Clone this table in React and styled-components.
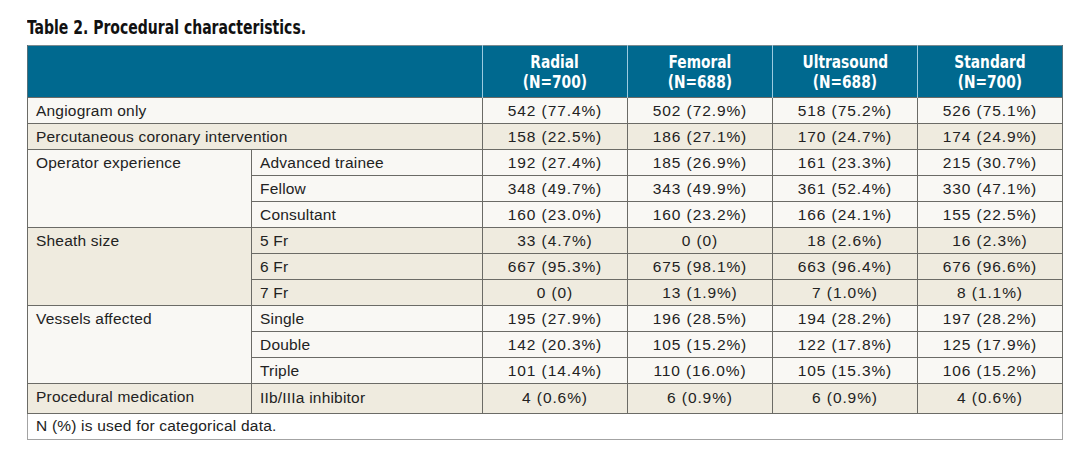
import React from "react";
import styled, { createGlobalStyle } from "styled-components";

const Global = createGlobalStyle`
  html, body { margin: 0; padding: 0; background: #ffffff; }
  body { font-family: "Liberation Sans", Arial, sans-serif; color: #222; }
`;

const Page = styled.div`
  width: 1086px;
  height: 462px;
  padding: 0 0 0 27px;
  box-sizing: border-box;
  overflow: hidden;
`;

const Title = styled.h1`
  margin: 0;
  padding-top: 16px;
  height: 45px;
  box-sizing: border-box;
  font-family: "DejaVu Sans Condensed", "DejaVu Sans", sans-serif;
  font-stretch: condensed;
  font-weight: 700;
  font-size: 19px;
  line-height: 22px;
  color: #111;
  white-space: nowrap;
`;

const Squeeze = styled.span`
  display: inline-block;
  transform: scaleX(${(p) => p.$x});
  transform-origin: ${(p) => (p.$left ? "left center" : "center center")};
`;

const Table = styled.table`
  border-collapse: collapse;
  table-layout: fixed;
  width: 1035px;
  font-size: 15.5px;
  color: #222;
`;

const HeadRow = styled.tr`
  background: #00698f;
  height: 52px;
  border-top: 1px solid #7a8a90;
`;

const HeadCell = styled.th`
  padding: 0;
  font-family: "DejaVu Sans Condensed", "DejaVu Sans", sans-serif;
  font-stretch: condensed;
  font-weight: 700;
  font-size: 18px;
  line-height: 20px;
  color: #ffffff;
  text-align: center;
  vertical-align: middle;
  white-space: nowrap;
  border-left: 1px solid #9ccbe0;
  &:first-child { border-left: 1px solid #55707a; }
  &:last-child { border-right: 1px solid #55707a; }
`;

const Row = styled.tr`
  height: 26px;
`;

const Cell = styled.td`
  padding: 0 8px;
  height: 24.8px;
  line-height: 18px;
  vertical-align: ${(p) => (p.$top ? "top" : "middle")};
  padding-top: ${(p) => (p.$top ? "4px" : "0")};
  background: ${(p) => (p.$shade ? "#efebdf" : "#f9f8f4")};
  border: 1px solid #6b6b66;
  text-align: ${(p) => (p.$num ? "center" : "left")};
  letter-spacing: ${(p) => (p.$num ? "0.9px" : "0.2px")};
  white-space: nowrap;
  overflow: hidden;
`;

const FootCell = styled.td`
  padding: 0 8px;
  height: 24.8px;
  background: #ffffff;
  border: 1px solid #a3a3a3;
  border-top: 1px solid #6b6b66;
  text-align: left;
  letter-spacing: 0.2px;
`;

const groups = [
  { label: "Angiogram only", rows: [[null, "542 (77.4%)", "502 (72.9%)", "518 (75.2%)", "526 (75.1%)"]], shade: false },
  { label: "Percutaneous coronary intervention", rows: [[null, "158 (22.5%)", "186 (27.1%)", "170 (24.7%)", "174 (24.9%)"]], shade: true },
  {
    label: "Operator experience",
    shade: false,
    rows: [
      ["Advanced trainee", "192 (27.4%)", "185 (26.9%)", "161 (23.3%)", "215 (30.7%)"],
      ["Fellow", "348 (49.7%)", "343 (49.9%)", "361 (52.4%)", "330 (47.1%)"],
      ["Consultant", "160 (23.0%)", "160 (23.2%)", "166 (24.1%)", "155 (22.5%)"],
    ],
  },
  {
    label: "Sheath size",
    shade: true,
    rows: [
      ["5 Fr", "33 (4.7%)", "0 (0)", "18 (2.6%)", "16 (2.3%)"],
      ["6 Fr", "667 (95.3%)", "675 (98.1%)", "663 (96.4%)", "676 (96.6%)"],
      ["7 Fr", "0 (0)", "13 (1.9%)", "7 (1.0%)", "8 (1.1%)"],
    ],
  },
  {
    label: "Vessels affected",
    shade: false,
    rows: [
      ["Single", "195 (27.9%)", "196 (28.5%)", "194 (28.2%)", "197 (28.2%)"],
      ["Double", "142 (20.3%)", "105 (15.2%)", "122 (17.8%)", "125 (17.9%)"],
      ["Triple", "101 (14.4%)", "110 (16.0%)", "105 (15.3%)", "106 (15.2%)"],
    ],
  },
  {
    label: "Procedural medication",
    shade: true,
    rows: [["IIb/IIIa inhibitor", "4 (0.6%)", "6 (0.9%)", "6 (0.9%)", "4 (0.6%)"]],
  },
];

const heads = [
  ["Radial", "(N=700)"],
  ["Femoral", "(N=688)"],
  ["Ultrasound", "(N=688)"],
  ["Standard", "(N=700)"],
];

export default function App() {
  return (
    <Page>
      <Global />
      <Title>
        <Squeeze $x={0.82} $left>Table 2. Procedural characteristics.</Squeeze>
      </Title>
      <Table>
        <colgroup>
          <col style={{ width: 224 }} />
          <col style={{ width: 231 }} />
          <col style={{ width: 145 }} />
          <col style={{ width: 145 }} />
          <col style={{ width: 145 }} />
          <col style={{ width: 145 }} />
        </colgroup>
        <thead>
          <HeadRow>
            <HeadCell colSpan={2} />
            {heads.map(([a, b]) => (
              <HeadCell key={a}>
                <Squeeze $x={0.85}>{a}</Squeeze>
                <br />
                <Squeeze $x={0.85}>{b}</Squeeze>
              </HeadCell>
            ))}
          </HeadRow>
        </thead>
        <tbody>
          {groups.map((g) =>
            g.rows.map((r, i) => (
              <Row key={g.label + i}>
                {i === 0 &&
                  (r[0] === null ? (
                    <Cell colSpan={2} $shade={g.shade}>{g.label}</Cell>
                  ) : (
                    <Cell rowSpan={g.rows.length} $shade={g.shade} $top>
                      {g.label}
                    </Cell>
                  ))}
                {r[0] !== null && <Cell $shade={g.shade}>{r[0]}</Cell>}
                {r.slice(1).map((v, j) => (
                  <Cell key={j} $shade={g.shade} $num>
                    {v}
                  </Cell>
                ))}
              </Row>
            ))
          )}
          <tr>
            <FootCell colSpan={6}>N (%) is used for categorical data.</FootCell>
          </tr>
        </tbody>
      </Table>
    </Page>
  );
}
